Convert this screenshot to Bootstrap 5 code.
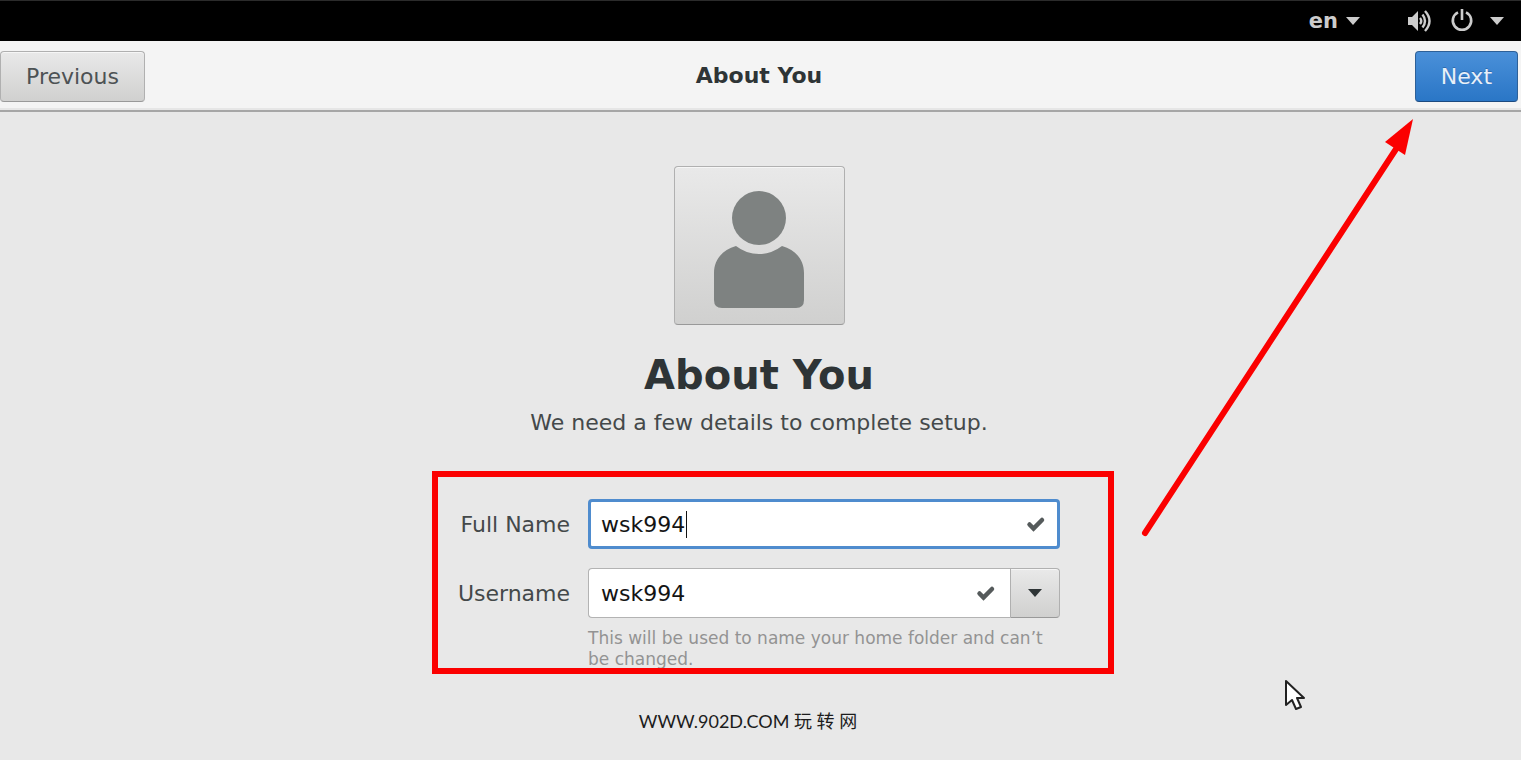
<!DOCTYPE html>
<html lang="en">
<head>
<meta charset="utf-8">
<meta name="viewport" content="width=device-width, initial-scale=1">
<title>About You</title>
<link href="https://cdn.jsdelivr.net/npm/bootstrap@5.3.0/dist/css/bootstrap.min.css" rel="stylesheet">
<style>
  body { background: #e8e8e8; color: #44494a; font: 22px/28px "DejaVu Sans", sans-serif; overflow-x: hidden; }
  .panel-bar { background: #000; height: 41px; box-shadow: inset 0 1px #2b2b2b; padding-right: 17px; }
  .panel-bar button { background: none; border: 0; padding: 0; color: #ccc; font-size: 21px; font-weight: 700; line-height: 28px; }
  .title-bar { background: #f4f4f4; height: 71px; border-bottom: 2px solid #a6a6a6; box-shadow: inset 0 -2px #e6e6e6; padding: 1px 3px 0 0; }
  .title-bar h1 { font-size: 22px; line-height: 28px; font-weight: 700; color: #2e3436; }
  .gtk-btn { --bs-btn-font-size: 22px; --bs-btn-line-height: 29px; --bs-btn-border-radius: 4px; --bs-btn-padding-y: 10px; --bs-btn-padding-x: 25px;
    --bs-btn-color: #4d5254; --bs-btn-border-color: #b0b0b0; --bs-btn-hover-border-color: #a0a0a0;
    background: linear-gradient(#e9e9e9, #d0d0cf); border-bottom-color: #999; box-shadow: inset 0 1px #f6f6f6; }
  .gtk-primary { --bs-btn-color: #e8f0f9; --bs-btn-hover-color: #fff; --bs-btn-border-color: #2d6098;
    background: linear-gradient(#4a90d9, #2a76c6); border-bottom-color: #1c4a80; box-shadow: none; text-shadow: 0 -1px #2c6cb0; }
  main { padding-top: 54px; padding-right: 3px; }
  .avatar { width: 171px; height: 159px; padding: 0; }
  .page-title { font-size: 40px; line-height: 48px; font-weight: 700; color: #2e3436; margin-top: 26px; }
  .intro { margin-top: 10px; }
  .details { display: grid; grid-template-columns: max-content minmax(0, 472px); column-gap: 18px; row-gap: 19px; max-width: 100%; margin-top: 62px; }
  .details label { line-height: 52px; height: 50px; }
  .details .form-control { height: 50px; border: 1px solid #b3b3b3; border-radius: 4px; font-size: 22px; line-height: 28px; padding: 10px 60px 10px 12px; color: #141414; box-shadow: none; }
  .details .form-control.active-field { border: 3px solid #4f8cce; padding: 8px 60px 8px 10px; caret-color: transparent; }
  .details .drop { width: 50px; padding: 0; border-radius: 0 4px 4px 0; }
  .tick { right: 14px; }
  .caret { left: 98px; width: 1px; height: 27px; background: #111; }
  .hint { font-size: 17px; line-height: 21px; color: #939393; margin-top: 10px; }
  .marker { inset: -28px -54px -4px -26px; border: 6px solid #fb0000; pointer-events: none; }
  .site { font: 400 18px/28px Lato, "Noto Sans CJK SC", sans-serif; color: #1c1c1c; padding-right: 22px; margin-top: 37px; }
  .arrow { top: 116px; right: 103px; pointer-events: none; }
  .pointer { top: 678px; right: 215px; pointer-events: none; }
</style>
</head>
<body class="position-relative min-vh-100">
<nav class="panel-bar d-flex justify-content-end align-items-center" aria-label="System">
  <button type="button" class="d-flex align-items-center me-5">en
    <svg class="ms-2" width="14" height="8" viewBox="0 0 14 8"><path d="M0 0h14L7 8z" fill="#ccc"/></svg>
  </button>
  <button type="button" class="d-flex align-items-center" aria-label="Sound and power">
    <svg width="24" height="24" viewBox="0 0 24 24" fill="none" stroke="#ccc" stroke-width="2">
      <path d="M0 8h4l6-6v20l-6-6H0z" fill="#ccc" stroke="none"/>
      <path d="M12 9q2.500 3 0 6M14.500 5.500q5 6.500 0 13M17 2q9 10 0 20" stroke-width="2.400"/>
    </svg>
    <svg class="mx-3" width="26" height="24" viewBox="-2 0 26 24" fill="none" stroke="#ccc" stroke-width="2.600"><path d="M8 3.300a9.200 9.200 0 1 0 8 0M12 0v11"/></svg>
    <svg width="14" height="8" viewBox="0 0 14 8"><path d="M0 0h14L7 8z" fill="#ccc"/></svg>
  </button>
</nav>
<header class="title-bar row g-0 align-items-center">
  <div class="col"><button type="button" class="btn gtk-btn">Previous</button></div>
  <h1 class="col-auto m-0">About You</h1>
  <div class="col text-end"><button type="button" class="btn gtk-btn gtk-primary">Next</button></div>
</header>
<main class="d-flex flex-column align-items-center">
  <button type="button" class="btn gtk-btn avatar d-flex justify-content-center align-items-center" aria-label="Choose picture">
    <svg width="92" height="126" viewBox="0 -6 92 126" fill="#7e8281"><circle cx="46" cy="29" r="27"/><path d="M23 57A37 37 0 0 0 69 57C83 61 91 71 91 84v27q0 8-8 8H9q-8 0-8-8V84C1 71 9 61 23 57z"/></svg>
  </button>
  <h2 class="page-title text-center mb-0">About You</h2>
  <p class="intro text-center mb-0">We need a few details to complete setup.</p>
  <form class="details position-relative">
    <label for="fullname" class="text-end">Full Name</label>
    <div class="position-relative d-flex align-items-center">
      <input id="fullname" class="form-control active-field" type="text" value="wsk994">
      <span class="caret position-absolute"></span>
      <svg class="tick position-absolute" width="20" height="16" viewBox="0 0 20 16"><path d="M3.500 8.500l4 4L16 4" fill="none" stroke="#555a5b" stroke-width="4.500" stroke-linecap="round"/></svg>
    </div>
    <label for="username" class="text-end">Username</label>
    <div>
      <div class="d-flex">
        <div class="position-relative d-flex align-items-center flex-grow-1">
          <input id="username" class="form-control rounded-end-0 border-end-0" type="text" value="wsk994" aria-describedby="username-hint">
          <svg class="tick position-absolute" width="20" height="16" viewBox="0 0 20 16"><path d="M3.500 8.500l4 4L16 4" fill="none" stroke="#555a5b" stroke-width="4.500" stroke-linecap="round"/></svg>
        </div>
        <button type="button" class="btn gtk-btn drop d-flex justify-content-center align-items-center" aria-label="Suggestions"><svg width="14" height="8" viewBox="0 0 14 8"><path d="M0 0h14L7 8z" fill="#2e3436"/></svg></button>
      </div>
      <p id="username-hint" class="hint mb-0">This will be used to name your home folder and can’t be changed.</p>
    </div>
    <div class="marker position-absolute"></div>
  </form>
  <p class="site mb-0">WWW.902D.COM 玩 转 网</p>
</main>
<svg class="arrow position-absolute" width="280" height="424" viewBox="0 0 280 424"><path d="M7 417L260 30" stroke="#fb0000" stroke-width="6" stroke-linecap="round"/><path d="M275 3L247 26l20 13z" fill="#fb0000"/></svg>
<svg class="pointer position-absolute" width="22" height="34" viewBox="0 0 22 34"><path d="M2 3v24l6-5 4 9 5-2-4-9h7z" fill="#fff" stroke="#222" stroke-width="2" stroke-linejoin="round"/></svg>
<script src="https://cdn.jsdelivr.net/npm/bootstrap@5.3.0/dist/js/bootstrap.bundle.min.js"></script>
</body>
</html>
